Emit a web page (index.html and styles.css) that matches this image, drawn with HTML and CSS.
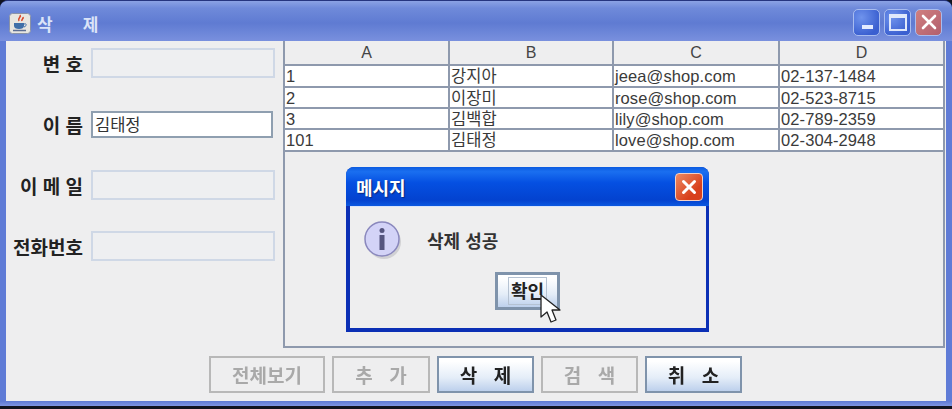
FILE: index.html
```html
<!DOCTYPE html>
<html lang="ko">
<head>
<meta charset="utf-8">
<title>삭제</title>
<link rel="stylesheet" href="styles.css">
</head>
<body>
<div class="window">
  <header class="titlebar">
    <svg class="java-icon" width="22" height="21" viewBox="0 0 22 21">
      <rect x="0.5" y="0.5" width="21" height="20" rx="3" fill="#e8e6e0" stroke="#8a93a8"/>
      <path d="M11 2c2 2-3 3-1 6M14 4c1 2-2 2-1 4" fill="none" stroke="#d8472b" stroke-width="1.600"/>
      <path d="M5 10h10v3c0 2-2 3-5 3s-5-1-5-3z" fill="#3f6fa8"/>
      <path d="M15 11c3-1 3 2 0 3" fill="none" stroke="#3f6fa8"/>
      <path d="M4 17.500h13" stroke="#5c6d92" stroke-width="1.400"/>
    </svg>
    <span class="window-title">삭<span class="title-gap"></span>제</span>
    <div class="window-controls">
      <span class="ctl ctl-blue"><i class="min-glyph"></i></span>
      <span class="ctl ctl-blue"><i class="max-glyph"></i></span>
      <span class="ctl ctl-red">
        <svg width="18" height="18" viewBox="0 0 18 18"><path d="M3 3l12 12M15 3L3 15" stroke="#fff" stroke-width="2.600" stroke-linecap="round"/></svg>
      </span>
    </div>
  </header>

  <main class="client">
    <div class="upper">
      <form class="fields">
        <div class="field"><label class="field-label">변 호</label><div class="input input-off"></div></div>
        <div class="field"><label class="field-label">이 름</label><div class="input input-on">김태정</div></div>
        <div class="field"><label class="field-label">이 메 일</label><div class="input input-off"></div></div>
        <div class="field"><label class="field-label">전화번호</label><div class="input input-off"></div></div>
      </form>
      <section class="table-pane">
        <div class="grid-table">
          <div class="th">A</div><div class="th">B</div><div class="th">C</div><div class="th">D</div>
          <div class="td">1</div><div class="td">강지아</div><div class="td">jeea@shop.com</div><div class="td">02-137-1484</div>
          <div class="td">2</div><div class="td">이장미</div><div class="td">rose@shop.com</div><div class="td">02-523-8715</div>
          <div class="td">3</div><div class="td">김백합</div><div class="td">lily@shop.com</div><div class="td">02-789-2359</div>
          <div class="td">101</div><div class="td">김태정</div><div class="td">love@shop.com</div><div class="td">02-304-2948</div>
        </div>
      </section>
    </div>
    <footer class="actions">
      <button class="btn btn-off btn-all" type="button">전체보기</button>
      <button class="btn btn-off btn-add" type="button">추&nbsp;&nbsp;가</button>
      <button class="btn btn-on btn-del" type="button">삭&nbsp;&nbsp;제</button>
      <button class="btn btn-off btn-find" type="button">검&nbsp;&nbsp;색</button>
      <button class="btn btn-on btn-cancel" type="button">취&nbsp;&nbsp;소</button>
    </footer>
  </main>
  <div class="bottom-edge"></div>

  <div class="dialog">
    <div class="dialog-title">
      <span>메시지</span>
      <span class="dialog-close">
        <svg width="18" height="18" viewBox="0 0 18 18"><path d="M3.500 3.500l11 11M14.500 3.500l-11 11" stroke="#fff" stroke-width="3" stroke-linecap="round"/></svg>
      </span>
    </div>
    <div class="dialog-body">
      <div class="dialog-message">
        <svg class="info-icon" width="40" height="40" viewBox="0 0 40 40">
          <circle cx="20" cy="21" r="17" fill="#b9b9bd" opacity="0.55"/>
          <circle cx="18" cy="18" r="17" fill="#d3d3f7" stroke="#8a88bd" stroke-width="1.500"/>
          <circle cx="18" cy="9.500" r="2.500" fill="#55557f"/>
          <rect x="15.500" y="14" width="5" height="15" fill="#55557f"/>
        </svg>
        <span class="message-text">삭제 성공</span>
      </div>
      <div class="dialog-actions">
        <button class="ok-btn" type="button"><span class="ok-focus">확인</span></button>
        <svg class="cursor" width="24" height="32" viewBox="0 0 24 32">
          <path d="M2 1v22l6-5 4 10 5-2-4-10h8z" fill="#fff" stroke="#222" stroke-width="1.300" stroke-linejoin="round"/>
        </svg>
      </div>
    </div>
  </div>
</div>
</body>
</html>
```
FILE: styles.css
```css
* { box-sizing: border-box; }
html, body { margin: 0; padding: 0; }
body {
  width: 952px;
  height: 409px;
  overflow: hidden;
  background: #10131f;
  font-family: "Noto Sans CJK KR", "Liberation Sans", sans-serif;
}
.window {
  position: relative;
  width: 952px;
  height: 406px;
  background: #5f7bd6;
  border-radius: 8px 8px 0 0;
  border-top: 1px solid #26357f;
  display: flex;
  flex-direction: column;
  overflow: hidden;
  filter: blur(0.4px);
}
.titlebar {
  height: 40px;
  flex: none;
  display: flex;
  align-items: center;
  padding: 4px 10px 0 9px;
  background: linear-gradient(180deg, #8ba2e4 0%, #6f8ada 18%, #5f7bd2 55%, #7990de 100%);
}
.java-icon { flex: none; }
.window-title {
  margin-left: 6px;
  color: #dbe4f8;
  font-size: 17px;
  font-weight: 700;
  display: flex;
}
.title-gap { width: 30px; }
.window-controls { margin-left: auto; display: flex; gap: 4px; margin-top: -2px; }
.ctl {
  width: 27px;
  height: 27px;
  border-radius: 5px;
  border: 1px solid #a8bcef;
  display: flex;
  align-items: center;
  justify-content: center;
  position: relative;
}
.ctl-blue { background: radial-gradient(circle at 30% 30%, #6f93ec, #3a5fd0 75%); }
.ctl-red { background: linear-gradient(135deg, #d08080, #b25f6e); }
.min-glyph { position: absolute; left: 8px; bottom: 6px; width: 11px; height: 4px; background: #e4ecff; }
.max-glyph { width: 18px; height: 17px; border: 2px solid #dfe8fb; border-top-width: 4px; }
.client {
  flex: 1;
  margin: 0 6px;
  background: #eeeeef;
  display: flex;
  flex-direction: column;
  min-height: 0;
}
.bottom-edge { height: 5px; flex: none; background: linear-gradient(180deg, #5d79d4, #7e95e2); }
.upper { height: 307px; flex: none; display: flex; }
.fields {
  width: 277px;
  flex: none;
  padding: 7px 0 0 0;
  display: flex;
  flex-direction: column;
  gap: 31px;
}
.field { display: flex; align-items: center; height: 30px; }
.field-label {
  width: 77px;
  flex: none;
  text-align: right;
  font-size: 19px;
  font-weight: 700;
  color: #222;
  white-space: nowrap;
}
.input {
  margin-left: 8px;
  width: 184px;
  height: 30px;
  font-size: 16.500px;
  line-height: 22px;
  padding-left: 2px;
  color: #333;
}
.input-off { background: #eeeff1; border: 2px solid #cfd8e6; }
.input-on { background: #fff; border: 2px solid #8f9fb0; height: 27px; width: 182px; }
.table-pane {
  flex: 1;
  margin-right: 1px;
  border-left: 2px solid #8e99ad;
  border-right: 2px solid #8e99ad;
  border-bottom: 2px solid #8e99ad;
  min-width: 0;
}
.grid-table {
  display: grid;
  grid-template-columns: 165px 164px 166px 1fr;
  grid-template-rows: 25px 22px 21px 21px 22px;
}
.th {
  background: #eeeeef;
  border-right: 2px solid #8e99ad;
  border-bottom: 2px solid #8e99ad;
  font-family: "Liberation Sans", sans-serif;
  font-size: 16px;
  color: #444;
  display: flex;
  align-items: center;
  justify-content: center;
}
.td {
  background: #fff;
  border-right: 2px solid #8e99ad;
  border-bottom: 2px solid #8e99ad;
  font-family: "Liberation Sans", "Noto Sans CJK KR", sans-serif;
  font-size: 16.500px;
  letter-spacing: 0.1px;
  color: #3a3a3a;
  padding-left: 1px;
  line-height: 20px;
  white-space: nowrap;
  overflow: hidden;
}
.th:nth-child(4n), .td:nth-child(4n) { border-right: 0; }
.actions { flex: 1; display: flex; align-items: flex-start; gap: 7px; padding: 8px 0 0 203px; }
.btn {
  height: 37px;
  flex: none;
  font-family: "Noto Sans CJK KR", sans-serif;
  font-size: 19px;
  font-weight: 700;
  word-spacing: 3px;
  padding: 0;
}
.btn-off { background: #eeeeef; border: 2px solid #b8b8b8; color: #a9a9a9; }
.btn-on { background: linear-gradient(180deg, #fff 10%, #e4edf8 60%, #bdd0ec 100%); border: 2px solid #7f93ab; color: #222; }
.btn-all { width: 116px; }
.btn-add { width: 98px; }
.btn-del { width: 97px; }
.btn-find { width: 97px; }
.btn-cancel { width: 97px; }
.dialog {
  position: absolute;
  left: 346px;
  top: 166px;
  width: 363px;
  height: 165px;
  background: #0b2fb5;
  border-radius: 8px 8px 0 0;
  display: flex;
  flex-direction: column;
  padding: 0 3px 4px 4px;
}
.dialog-title {
  height: 39px;
  flex: none;
  margin: 0 -3px 0 -4px;
  padding: 0 6px 0 10px;
  border-radius: 8px 8px 0 0;
  display: flex;
  align-items: center;
  justify-content: space-between;
  color: #fff;
  font-size: 18px;
  font-weight: 700;
  background: linear-gradient(180deg, #0b5be0 0%, #1a6ff0 12%, #0550e2 40%, #0342cf 85%, #0b58e0 100%);
  text-shadow: 1px 1px 1px #0a2a80;
}
.dialog-close {
  width: 28px;
  height: 28px;
  border: 1px solid #f4d0c4;
  border-radius: 4px;
  background: linear-gradient(135deg, #ee8a62, #d8401c 70%);
  display: flex;
  align-items: center;
  justify-content: center;
}
.dialog-body { flex: 1; background: #eeeeef; border-top: 1px solid #d8e4fa; position: relative; }
.dialog-message { display: flex; align-items: flex-start; padding: 14px 0 0 14px; height: 65px; }
.info-icon { flex: none; }
.message-text { margin-left: 23px; font-size: 18px; line-height: 22px; font-weight: 700; color: #333; margin-top: 8px; white-space: nowrap; }
.dialog-actions { position: relative; display: flex; justify-content: flex-start; padding-left: 145px; }
.ok-btn {
  width: 65px;
  height: 38px;
  flex: none;
  padding: 0;
  background: linear-gradient(180deg, #fff 10%, #e4edf8 60%, #bdd0ec 100%);
  border: 3px solid #7f93ab;
  display: flex;
  align-items: center;
  justify-content: center;
}
.ok-focus {
  border: 1px solid #b5c2d2;
  width: 39px;
  height: 28px;
  font-family: "Noto Sans CJK KR", sans-serif;
  font-size: 18px;
  font-weight: 700;
  color: #222;
  line-height: 24px;
  white-space: nowrap;
  text-align: center;
}
.cursor { position: absolute; left: 189px; top: 22px; }
```
